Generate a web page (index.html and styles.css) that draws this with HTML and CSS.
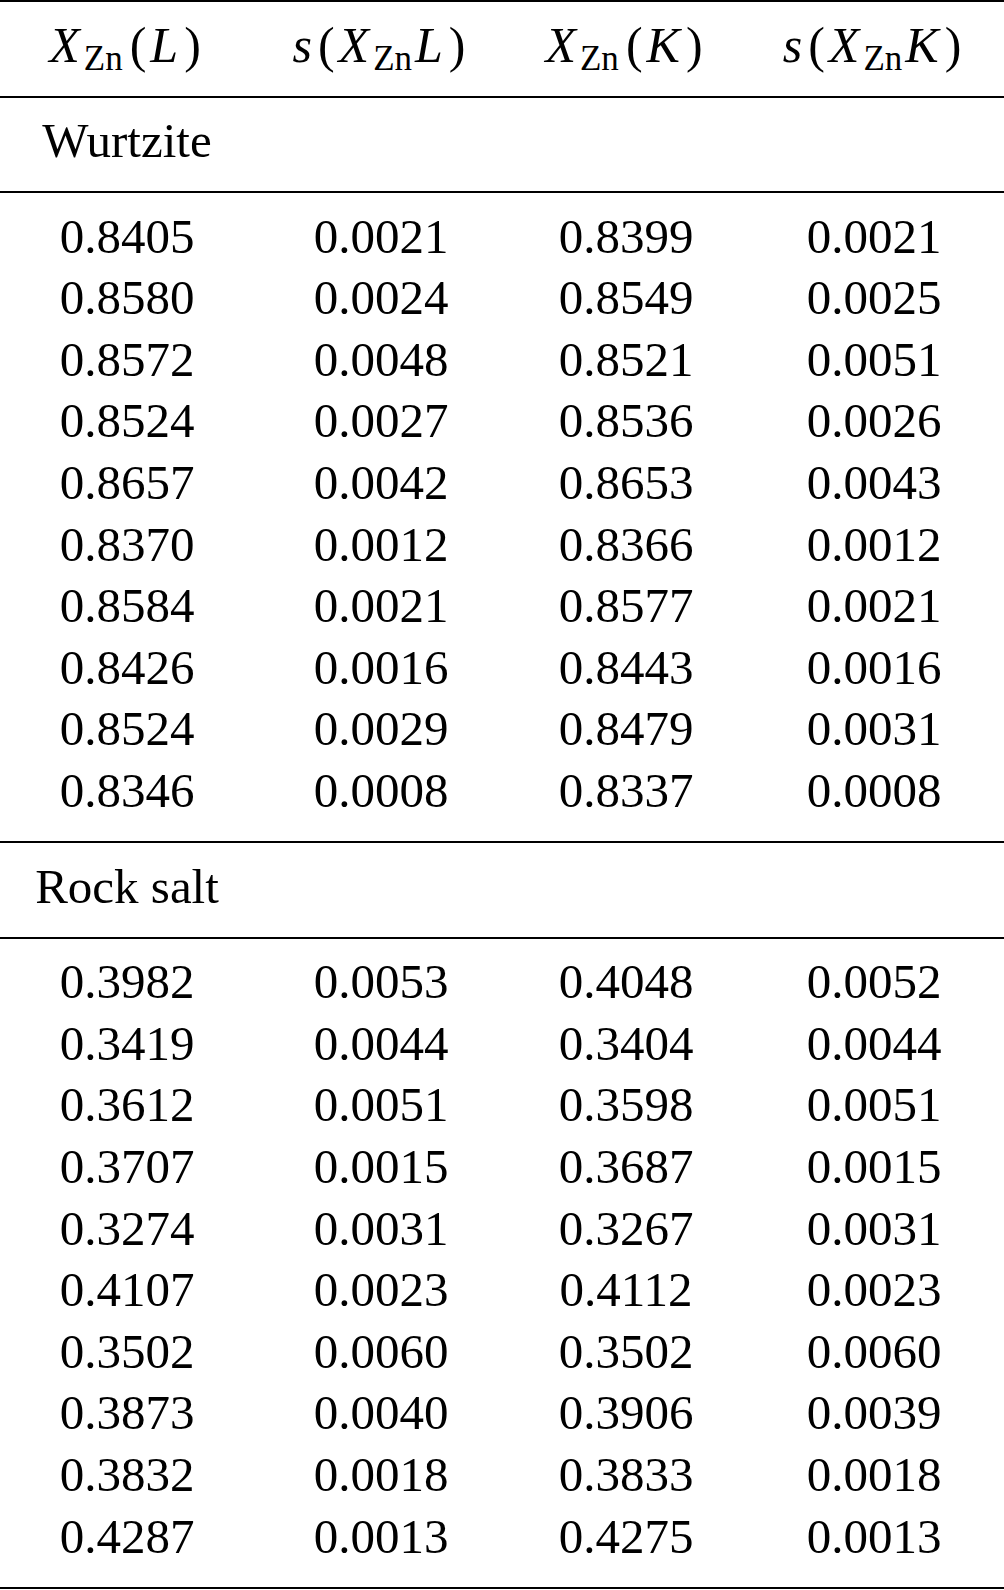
FILE: index.html
```html
<!DOCTYPE html>
<html>
<head>
<meta charset="utf-8">
<link rel="stylesheet" href="styles.css">
</head>
<body>
<div class="tbl">
  <div class="sec">
    <div class="row head">
      <span><i class="v">X</i><span class="sub">Zn</span><span class="p">(</span><i class="v">L</i><span class="p">)</span></span>
      <span><i class="v">s</i><span class="p">(</span><i class="v">X</i><span class="sub">Zn</span><i class="v">L</i><span class="p">)</span></span>
      <span><i class="v">X</i><span class="sub">Zn</span><span class="p">(</span><i class="v">K</i><span class="p">)</span></span>
      <span><i class="v">s</i><span class="p">(</span><i class="v">X</i><span class="sub">Zn</span><i class="v">K</i><span class="p">)</span></span>
    </div>
  </div>
  <div class="sec">
    <div class="row"><span>Wurtzite</span></div>
  </div>
  <div class="sec">
    <div class="row"><span>0.8405</span><span>0.0021</span><span>0.8399</span><span>0.0021</span></div>
    <div class="row"><span>0.8580</span><span>0.0024</span><span>0.8549</span><span>0.0025</span></div>
    <div class="row"><span>0.8572</span><span>0.0048</span><span>0.8521</span><span>0.0051</span></div>
    <div class="row"><span>0.8524</span><span>0.0027</span><span>0.8536</span><span>0.0026</span></div>
    <div class="row"><span>0.8657</span><span>0.0042</span><span>0.8653</span><span>0.0043</span></div>
    <div class="row"><span>0.8370</span><span>0.0012</span><span>0.8366</span><span>0.0012</span></div>
    <div class="row"><span>0.8584</span><span>0.0021</span><span>0.8577</span><span>0.0021</span></div>
    <div class="row"><span>0.8426</span><span>0.0016</span><span>0.8443</span><span>0.0016</span></div>
    <div class="row"><span>0.8524</span><span>0.0029</span><span>0.8479</span><span>0.0031</span></div>
    <div class="row"><span>0.8346</span><span>0.0008</span><span>0.8337</span><span>0.0008</span></div>
  </div>
  <div class="sec">
    <div class="row"><span>Rock salt</span></div>
  </div>
  <div class="sec">
    <div class="row"><span>0.3982</span><span>0.0053</span><span>0.4048</span><span>0.0052</span></div>
    <div class="row"><span>0.3419</span><span>0.0044</span><span>0.3404</span><span>0.0044</span></div>
    <div class="row"><span>0.3612</span><span>0.0051</span><span>0.3598</span><span>0.0051</span></div>
    <div class="row"><span>0.3707</span><span>0.0015</span><span>0.3687</span><span>0.0015</span></div>
    <div class="row"><span>0.3274</span><span>0.0031</span><span>0.3267</span><span>0.0031</span></div>
    <div class="row"><span>0.4107</span><span>0.0023</span><span>0.4112</span><span>0.0023</span></div>
    <div class="row"><span>0.3502</span><span>0.0060</span><span>0.3502</span><span>0.0060</span></div>
    <div class="row"><span>0.3873</span><span>0.0040</span><span>0.3906</span><span>0.0039</span></div>
    <div class="row"><span>0.3832</span><span>0.0018</span><span>0.3833</span><span>0.0018</span></div>
    <div class="row"><span>0.4287</span><span>0.0013</span><span>0.4275</span><span>0.0013</span></div>
  </div>
</div>
</body>
</html>
```
FILE: styles.css
```css
html, body {
  margin: 0;
  padding: 0;
  background: #fff;
}
body {
  font-family: "Liberation Serif", "Times New Roman", serif;
  font-size: 49px;
  color: #000;
}
.tbl {
  width: 1004px;
  border-top: 2px solid #000;
}
.sec {
  padding: 12.5px 0 19.5px;
  border-bottom: 2px solid #000;
}
.row {
  display: grid;
  grid-template-columns: 254px 254px 236px 260px;
  height: 61.6px;
  line-height: 61.6px;
  text-align: center;
  white-space: nowrap;
}
.head {
  font-size: 50px;
}
.v {
  font-style: italic;
  margin-right: 2px;
}
.p {
  margin: 0 4px;
}
.sub {
  font-size: 35px;
  line-height: 0;
  vertical-align: -8px;
  margin: 0 3px 0 2px;
}
```
